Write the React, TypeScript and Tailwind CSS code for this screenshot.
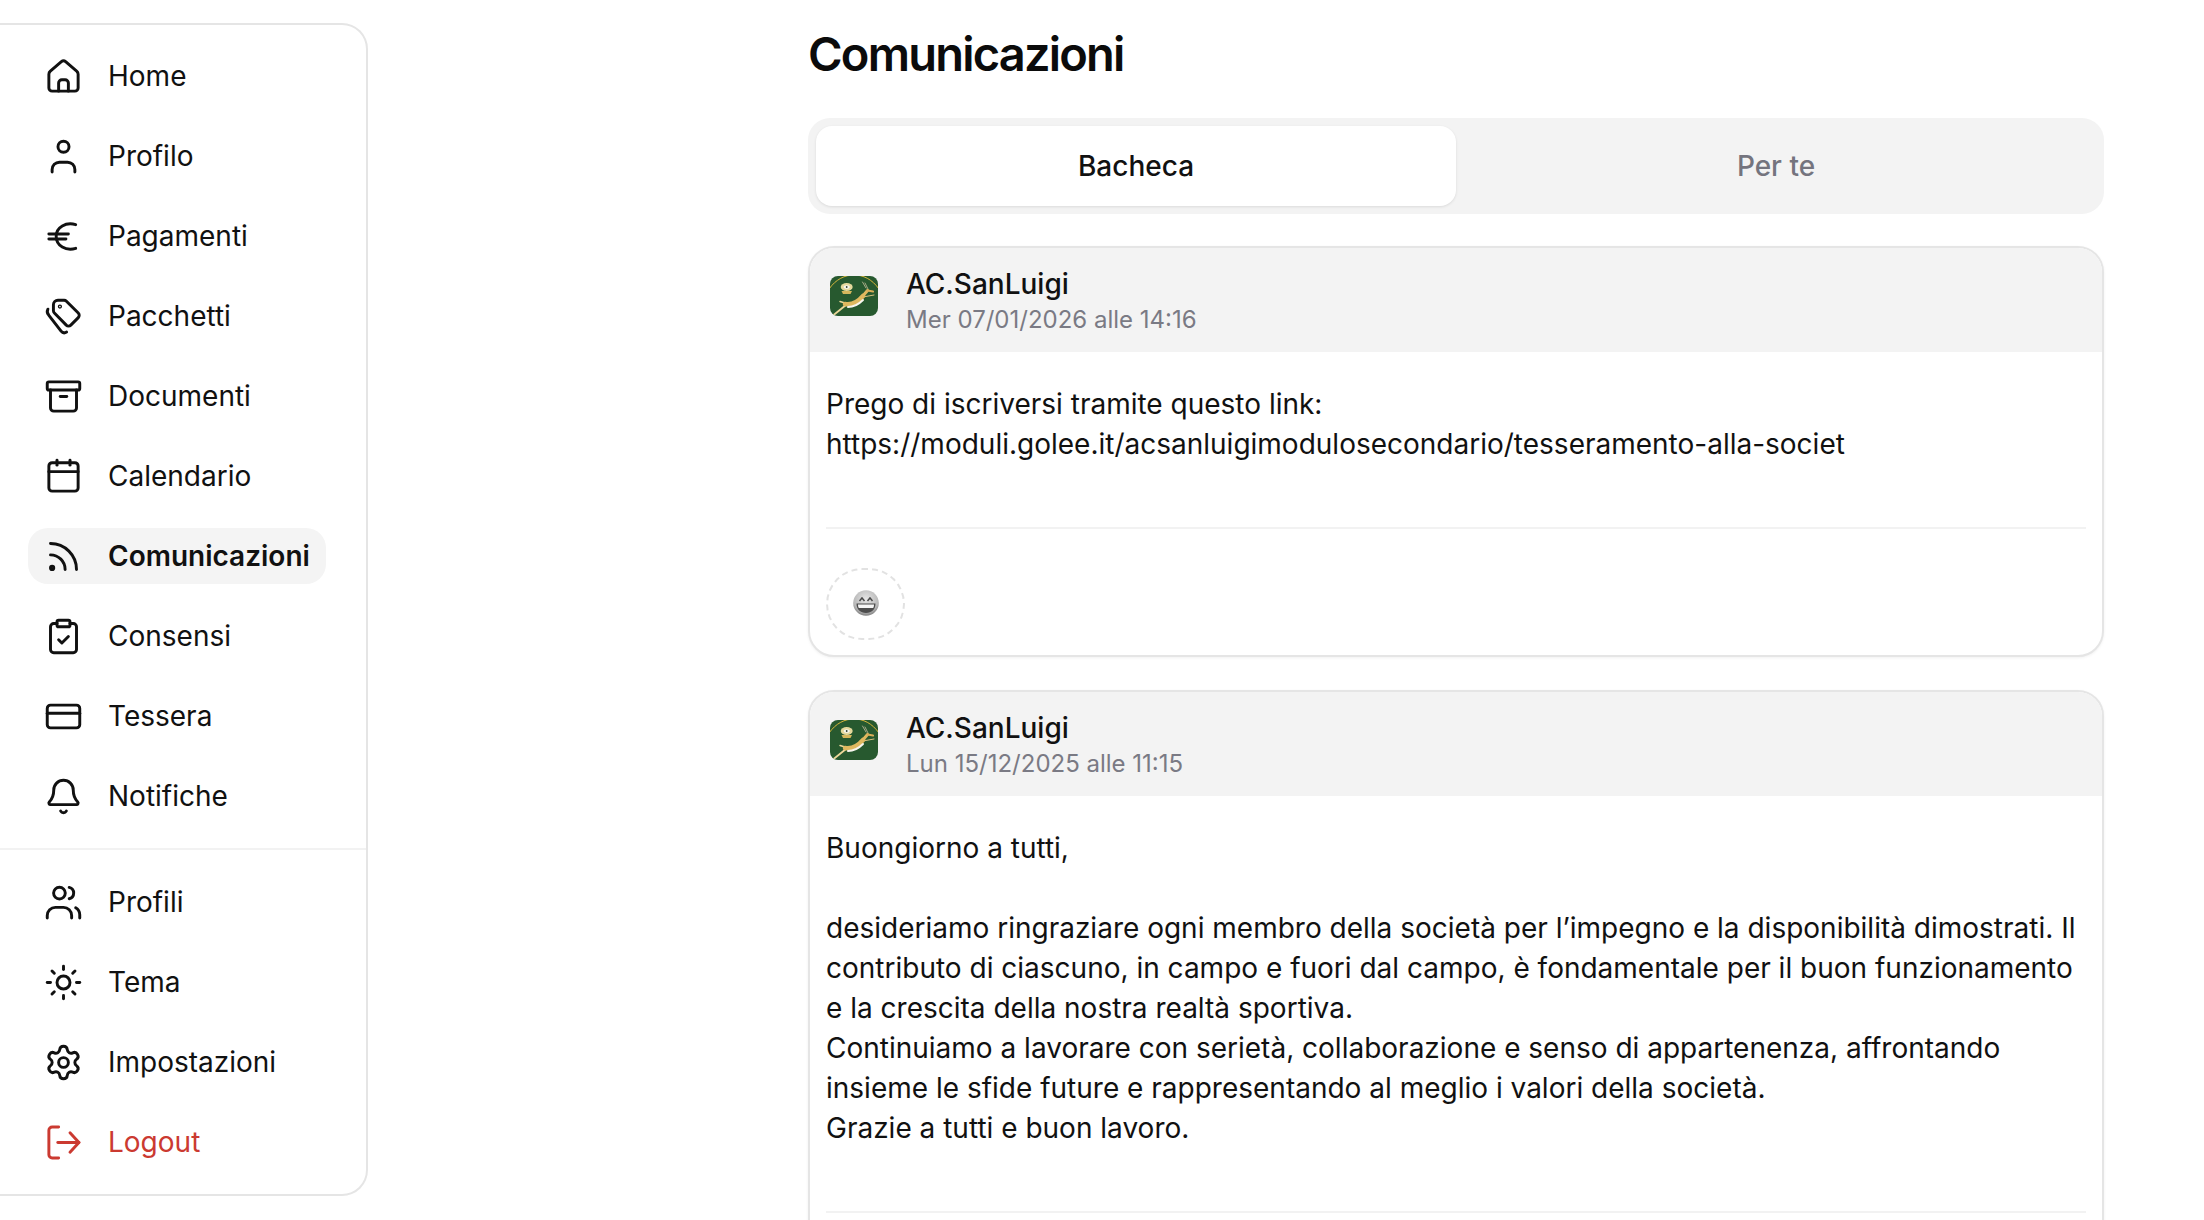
import type { ReactNode } from "react";
import { Archive, Bell, ClipboardCheck, CreditCard, Rss, Settings, Sun } from "lucide-react";

function Glyph({ children }: { children: ReactNode }) {
  return (
    <svg
      viewBox="0 0 24 24"
      fill="none"
      stroke="currentColor"
      strokeWidth={1.8}
      strokeLinecap="round"
      strokeLinejoin="round"
      className="h-[39px] w-[39px] shrink-0"
    >
      {children}
    </svg>
  );
}

const iconClass = "h-[39px] w-[39px] shrink-0";

const mainNav: { label: string; icon: ReactNode; active?: boolean }[] = [
  {
    label: "Home",
    icon: (
      <Glyph>
        <path d="M10.7 2.9 3.9 8.700A2.500 2.500 0 0 0 3 10.600V19a2 2 0 0 0 2 2h14a2 2 0 0 0 2-2v-8.400a2.500 2.500 0 0 0-.9-1.900l-6.800-5.800a2 2 0 0 0-2.600 0z" />
        <path d="M9 21v-5a2 2 0 0 1 2-2h2a2 2 0 0 1 2 2v5" />
      </Glyph>
    ),
  },
  {
    label: "Profilo",
    icon: (
      <Glyph>
        <circle cx="12" cy="6" r="3.400" />
        <path d="M5 21.500V20a4.500 4.500 0 0 1 4.500-4.500h5A4.500 4.500 0 0 1 19 20v1.500" />
      </Glyph>
    ),
  },
  {
    label: "Pagamenti",
    icon: (
      <Glyph>
        <path d="M19.500 4.700C13.500 3 7.500 6.200 7.500 12s6 9 12 7.300" />
        <path d="M3 10.500h12" />
        <path d="M3 13.500h10.500" />
      </Glyph>
    ),
  },
  {
    label: "Pacchetti",
    icon: (
      <Glyph>
        <path d="M8.600 2h3.800a2 2 0 0 1 1.400.6l7.300 7.300a2 2 0 0 1 0 2.800l-4.600 4.600a2 2 0 0 1-2.800 0L6.400 9.800a2 2 0 0 1-.6-1.400V4.800A2.800 2.800 0 0 1 8.600 2z" />
        <path d="M2.400 7.500a3.400 3.400 0 0 0 .6 3.800l7.500 9.700a2.600 2.600 0 0 0 3.400.6" />
        <circle cx="9.800" cy="5.900" r="0.400" />
      </Glyph>
    ),
  },
  { label: "Documenti", icon: <Archive className={iconClass} strokeWidth={1.8} /> },
  {
    label: "Calendario",
    icon: (
      <Glyph>
        <rect x="3" y="3.500" width="18" height="17.500" rx="2" />
        <path d="M3 9h18" />
        <path d="M8 2v3" />
        <path d="M16 2v3" />
      </Glyph>
    ),
  },
  { label: "Comunicazioni", icon: <Rss className={iconClass} strokeWidth={1.8} />, active: true },
  { label: "Consensi", icon: <ClipboardCheck className={iconClass} strokeWidth={1.8} /> },
  { label: "Tessera", icon: <CreditCard className={iconClass} strokeWidth={1.8} /> },
  { label: "Notifiche", icon: <Bell className={iconClass} strokeWidth={1.8} /> },
];

const otherNav: { label: string; icon: ReactNode; danger?: boolean }[] = [
  {
    label: "Profili",
    icon: (
      <Glyph>
        <circle cx="9.500" cy="6.200" r="3.600" />
        <path d="M15.500 2.700a3.600 3.600 0 0 1 0 7" />
        <path d="M2 21.500V20a5 5 0 0 1 5-5h5a5 5 0 0 1 5 5v1.500" />
        <path d="M19.500 15.200a5 5 0 0 1 2.500 4.300v2" />
      </Glyph>
    ),
  },
  { label: "Tema", icon: <Sun className={iconClass} strokeWidth={1.8} /> },
  { label: "Impostazioni", icon: <Settings className={iconClass} strokeWidth={1.8} /> },
  {
    label: "Logout",
    danger: true,
    icon: (
      <Glyph>
        <path d="M9 2.500H5a2 2 0 0 0-2 2v15a2 2 0 0 0 2 2h4" />
        <path d="M8.500 12h13" />
        <path d="m16 6 5.500 6-5.500 6" />
      </Glyph>
    ),
  },
];

function NavItem({
  label,
  icon,
  active,
  danger,
}: {
  label: string;
  icon: ReactNode;
  active?: boolean;
  danger?: boolean;
}) {
  return (
    <a
      className={`flex h-14 w-fit items-center gap-[25px] rounded-[20px] pl-4 pr-4 text-[28px] ${
        active ? "bg-[#f4f4f4] font-semibold text-[#111111]" : danger ? "text-[#cb3a31]" : "text-[#111111]"
      }`}
    >
      {icon}
      <span>{label}</span>
    </a>
  );
}

// springbok badge, drawn in strokes
function ClubLogo() {
  return (
    <svg viewBox="0 0 48 40" fill="none" strokeLinecap="round" className="mt-[11px] h-10 w-12 shrink-0 rounded-[8px]">
      <rect width="48" height="40" fill="#27592f" />
      <path d="M-1 13C6 3 15-1 24-1s18 4 25 14" stroke="#d6b63c" strokeWidth="1" />
      <ellipse cx="16.700" cy="11" rx="6" ry="4" fill="#e4d89c" />
      <ellipse cx="16.700" cy="11" rx="3" ry="1.800" fill="#f7f7f2" />
      <circle cx="16.700" cy="11" r="0.900" fill="#33402a" />
      <path d="M11.500 15h10.500l-1.500 3h-7.500z" fill="#d5b65c" />
      <path d="M36 12 32.500 6" stroke="#c9c0a0" strokeWidth="0.800" />
      <path d="M38 13 35 7" stroke="#c9c0a0" strokeWidth="0.800" />
      <path d="M16 29 3 39.500" stroke="#ecd79a" strokeWidth="1.800" />
      <path d="M15 27 10 25.500" stroke="#ecd79a" strokeWidth="1.500" />
      <path d="M33 21 44 19" stroke="#d9c27e" strokeWidth="1" />
      <path d="M15 28C21 29 28 26 33 20" stroke="#dfb85f" strokeWidth="4.500" />
      <path d="M32 21 37.500 14.500" stroke="#dfb85f" strokeWidth="3" />
      <path d="M37.500 14.500 43 15.500" stroke="#d8ad58" strokeWidth="2.200" />
      <path d="M18 31C24 31 29 28 33 24" stroke="#f8f6ee" strokeWidth="2" />
    </svg>
  );
}

function GrinEmoji() {
  return (
    <svg viewBox="0 0 26 26" className="-mt-0.5 h-[26px] w-[26px]">
      <defs>
        <radialGradient id="grin" cx="50%" cy="35%" r="65%">
          <stop offset="0%" stopColor="#e6e6e6" />
          <stop offset="75%" stopColor="#b9b9b9" />
          <stop offset="100%" stopColor="#7f7f7f" />
        </radialGradient>
      </defs>
      <circle cx="13" cy="13" r="12.800" fill="url(#grin)" />
      <path d="M6.500 11 9 8l2.500 3" fill="none" stroke="#4a4a4a" strokeWidth="1.500" />
      <path d="M14.500 11 17 8l2.500 3" fill="none" stroke="#4a4a4a" strokeWidth="1.500" />
      <path d="M3.500 13.500h19c0 6-4 9.500-9.500 9.500s-9.500-3.500-9.500-9.500z" fill="#4d4d4d" />
      <path d="M5 14.500h16c0 1.500-.3 2.500-.8 3.500H5.800c-.5-1-.8-2-.8-3.500z" fill="#f5f5f5" />
    </svg>
  );
}

function Post({ date, children }: { date: string; children: ReactNode }) {
  return (
    <article className="overflow-hidden rounded-[26px] border-2 border-[#e5e5e5] bg-white shadow-[0_1px_3px_rgba(0,0,0,0.06)]">
      <header className="flex h-[104px] items-start gap-[28px] bg-[#f3f3f3] pl-5 pt-[17px]">
        <ClubLogo />
        <div>
          <p className="text-[28px] font-medium leading-[38px] text-[#111111]">AC.SanLuigi</p>
          <p className="text-[24px] leading-[34px] text-[#7a7a84]">{date}</p>
        </div>
      </header>
      <div className="px-4 pt-8">
        <div className="pb-[63px] text-[28px] leading-10 text-[#111111]">{children}</div>
        <div className="h-0.5 bg-[#f2f2f2]" />
        <div className="pb-[15px] pt-[39px]">
          <button className="flex h-[72px] w-[79px] items-center justify-center rounded-full border-2 border-dashed border-[#e2e2e2]">
            <GrinEmoji />
          </button>
        </div>
      </div>
    </article>
  );
}

export default function App() {
  return (
    <div className="flex h-[1220px] items-start overflow-hidden bg-white font-[family-name:Inter,sans-serif]">
      <aside className="mt-[23px] w-[368px] shrink-0 rounded-r-[26px] border-2 border-l-0 border-[#e5e5e5] bg-white">
        <nav className="flex flex-col gap-6 border-b-2 border-[#f2f2f2] pb-6 pl-7 pt-[23px]">
          {mainNav.map((item) => (
            <NavItem key={item.label} {...item} />
          ))}
        </nav>
        <nav className="flex flex-col gap-6 pb-6 pl-7 pt-6">
          {otherNav.map((item) => (
            <NavItem key={item.label} {...item} />
          ))}
        </nav>
      </aside>

      <main className="ml-[440px] w-[1296px] shrink-0">
        <h1 className="pt-6 text-[47px] font-semibold leading-[60px] tracking-[-0.038em] text-[#0b0b0b]">
          Comunicazioni
        </h1>
        <div className="mt-[34px] grid h-24 grid-cols-2 gap-0 rounded-[22px] bg-[#f3f3f3] p-2 text-[28px]">
          <button className="rounded-[16px] bg-white font-medium text-[#111111] shadow-[0_1px_3px_rgba(0,0,0,0.1)]">
            Bacheca
          </button>
          <button className="font-medium text-[#74747e]">Per te</button>
        </div>
        <div className="mt-8 flex flex-col gap-[33px]">
          <Post date="Mer 07/01/2026 alle 14:16">
            <p>Prego di iscriversi tramite questo link:</p>
            <p>https://moduli.golee.it/acsanluigimodulosecondario/tesseramento-alla-societ</p>
          </Post>
          <Post date="Lun 15/12/2025 alle 11:15">
            <p>Buongiorno a tutti,</p>
            <p>&nbsp;</p>
            <p>
              desideriamo ringraziare ogni membro della società per l’impegno e la disponibilità dimostrati. Il
              contributo di ciascuno, in campo e fuori dal campo, è fondamentale per il buon funzionamento e la crescita
              della nostra realtà sportiva.
            </p>
            <p>
              Continuiamo a lavorare con serietà, collaborazione e senso di appartenenza, affrontando insieme le sfide
              future e rappresentando al meglio i valori della società.
            </p>
            <p>Grazie a tutti e buon lavoro.</p>
          </Post>
        </div>
      </main>
    </div>
  );
}
